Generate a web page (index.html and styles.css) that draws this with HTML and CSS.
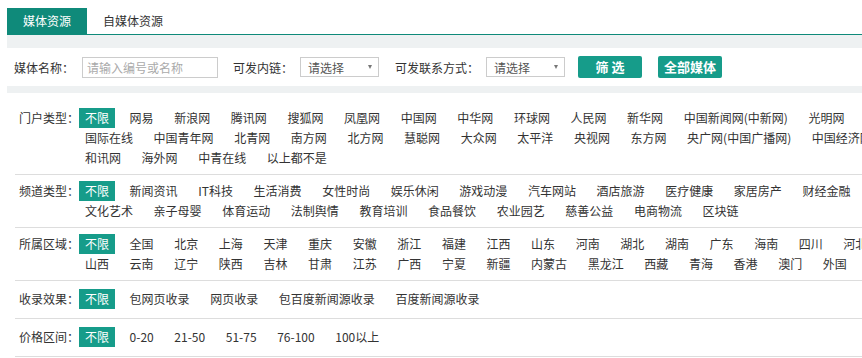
FILE: index.html
```html
<!DOCTYPE html>
<html lang="zh-CN">
<head>
<meta charset="utf-8">
<title>媒体资源</title>
<link rel="stylesheet" href="styles.css">
</head>
<body>
<div class="page">
  <div class="tabs">
    <div class="tab active">媒体资源</div>
    <div class="tab">自媒体资源</div>
  </div>
  <div class="content">
    <div class="search">
      <span class="s-label">媒体名称：</span>
      <div class="input">请输入编号或名称</div>
      <span class="s-label l2">可发内链：</span>
      <div class="select"><span>请选择</span><i class="arrow"></i></div>
      <span class="s-label l3">可发联系方式：</span>
      <div class="select"><span>请选择</span><i class="arrow"></i></div>
      <button class="btn first">筛 选</button>
      <button class="btn">全部媒体</button>
    </div>
    <div class="filters">
      <div class="row">
        <div class="label">门户类型：</div>
        <ul class="list">
          <li class="on">不限</li><li>网易</li><li>新浪网</li><li>腾讯网</li><li>搜狐网</li><li>凤凰网</li><li>中国网</li><li>中华网</li><li>环球网</li><li>人民网</li><li>新华网</li><li>中国新闻网(中新网)</li><li>光明网</li>
          <li>国际在线</li><li>中国青年网</li><li>北青网</li><li>南方网</li><li>北方网</li><li>慧聪网</li><li>大众网</li><li>太平洋</li><li>央视网</li><li>东方网</li><li>央广网(中国广播网)</li><li>中国经济网</li>
          <li>和讯网</li><li>海外网</li><li>中青在线</li><li>以上都不是</li>
        </ul>
      </div>
      <div class="row">
        <div class="label">频道类型：</div>
        <ul class="list">
          <li class="on">不限</li><li>新闻资讯</li><li>IT科技</li><li>生活消费</li><li>女性时尚</li><li>娱乐休闲</li><li>游戏动漫</li><li>汽车网站</li><li>酒店旅游</li><li>医疗健康</li><li>家居房产</li><li>财经金融</li>
          <li>文化艺术</li><li>亲子母婴</li><li>体育运动</li><li>法制舆情</li><li>教育培训</li><li>食品餐饮</li><li>农业园艺</li><li>慈善公益</li><li>电商物流</li><li>区块链</li>
        </ul>
      </div>
      <div class="row">
        <div class="label">所属区域：</div>
        <ul class="list">
          <li class="on">不限</li><li>全国</li><li>北京</li><li>上海</li><li>天津</li><li>重庆</li><li>安徽</li><li>浙江</li><li>福建</li><li>江西</li><li>山东</li><li>河南</li><li>湖北</li><li>湖南</li><li>广东</li><li>海南</li><li>四川</li><li>河北</li>
          <li>山西</li><li>云南</li><li>辽宁</li><li>陕西</li><li>吉林</li><li>甘肃</li><li>江苏</li><li>广西</li><li>宁夏</li><li>新疆</li><li>内蒙古</li><li>黑龙江</li><li>西藏</li><li>青海</li><li>香港</li><li>澳门</li><li>外国</li>
        </ul>
      </div>
      <div class="row single">
        <div class="label">收录效果：</div>
        <ul class="list">
          <li class="on">不限</li><li>包网页收录</li><li>网页收录</li><li>包百度新闻源收录</li><li>百度新闻源收录</li>
        </ul>
      </div>
      <div class="row single">
        <div class="label">价格区间：</div>
        <ul class="list">
          <li class="on">不限</li><li>0-20</li><li>21-50</li><li>51-75</li><li>76-100</li><li>100以上</li>
        </ul>
      </div>
    </div>
  </div>
</div>
</body>
</html>
```

FILE: styles.css
```css
html, body {
  margin: 0;
  padding: 0;
  background: #fff;
}
body {
  font-family: "Noto Sans CJK SC", "Noto Sans", sans-serif;
  font-size: 12px;
  color: #333;
  overflow: hidden;
}
.page {
  width: 898px;
  margin: 8px 0 0 7px;
}
.tabs {
  display: flex;
  height: 26px;
  border-bottom: 1px solid #0f8a7a;
}
.tab {
  line-height: 26px;
  padding: 0 16px;
  font-size: 12px;
  color: #333;
}
.tab.active {
  width: 80px;
  padding: 0;
  text-align: center;
  background: #0f8a7a;
  color: #fff;
}
.content {
  background: #eef1f2;
  padding-top: 13px;
}
.search {
  display: flex;
  align-items: center;
  height: 38px;
  background: #fff;
  padding-left: 7px;
  margin-bottom: 7px;
}
.s-label {
  width: 68px;
  white-space: nowrap;
  color: #333;
}
.s-label.l2 {
  width: 67px;
  margin-left: 15px;
}
.s-label.l3 {
  width: 91px;
  margin-left: 16px;
}
.input {
  box-sizing: border-box;
  width: 136px;
  height: 21px;
  line-height: 19px;
  border: 1px solid #ccc;
  padding-left: 4px;
  color: #aaa;
}
.select {
  box-sizing: border-box;
  display: flex;
  align-items: center;
  justify-content: space-between;
  width: 79px;
  height: 20px;
  border: 1px solid #ccc;
  padding: 0 6px 0 7px;
  color: #555;
}
.arrow {
  width: 0;
  height: 0;
  border-left: 2.5px solid transparent;
  border-right: 2.5px solid transparent;
  border-top: 4px solid #777;
}
.btn {
  box-sizing: border-box;
  width: 64px;
  height: 22px;
  margin-left: 16px;
  padding: 0;
  border: 0;
  border-radius: 2px;
  background: #169c8a;
  color: #fff;
  font-family: inherit;
  font-size: 13px;
  font-weight: bold;
  line-height: 22px;
}
.btn.first {
  margin-left: 13px;
}
.filters {
  background: #fff;
  padding: 9px 0 0 8px;
}
.row {
  display: flex;
  align-items: flex-start;
  border-bottom: 1px solid #ddd;
  padding: 6px 0;
}
.row.single {
  padding: 8px 0 9px;
}
.label {
  width: 60px;
  padding-left: 4px;
  line-height: 20px;
  white-space: nowrap;
  color: #333;
}
.list {
  display: flex;
  flex-wrap: wrap;
  width: 826px;
  margin: 0;
  padding: 0;
  list-style: none;
}
.list li {
  padding: 0 6px;
  margin-right: 8.6px;
  line-height: 20px;
  white-space: nowrap;
  color: #333;
}
.list li.on {
  background: #169c8a;
  color: #fff;
}
```
